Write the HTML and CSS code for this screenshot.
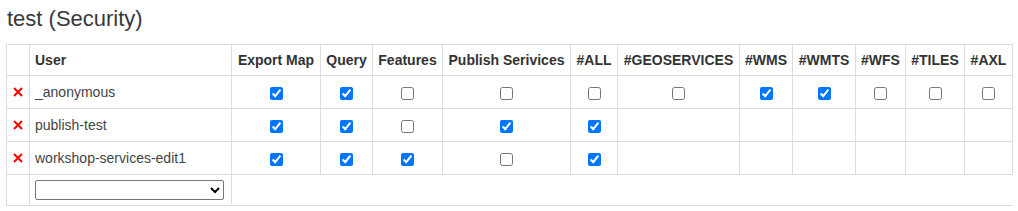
FILE: index.html
```html
<!DOCTYPE html>
<html>
<head>
<meta charset="utf-8">
<link rel="stylesheet" href="styles.css">
</head>
<body>
<h2 class="title">test (Security)</h2>
<table class="grid">
  <colgroup>
    <col class="c-del"><col class="c-user"><col class="c-export"><col class="c-query"><col class="c-feat"><col class="c-pub"><col class="c-all"><col class="c-geo"><col class="c-wms"><col class="c-wmts"><col class="c-wfs"><col class="c-tiles"><col class="c-axl">
  </colgroup>
  <thead>
    <tr>
      <th></th><th class="left">User</th><th>Export Map</th><th>Query</th><th>Features</th><th>Publish Serivices</th><th>#ALL</th><th>#GEOSERVICES</th><th>#WMS</th><th>#WMTS</th><th>#WFS</th><th>#TILES</th><th>#AXL</th>
    </tr>
  </thead>
  <tbody>
    <tr>
      <td class="del"><svg class="x" viewBox="0 0 10 10" width="10" height="10"><path d="M1 1 L9 9 M9 1 L1 9" stroke="#f00" stroke-width="2" fill="none"/></svg></td>
      <td class="left">_anonymous</td>
      <td><input type="checkbox" checked></td>
      <td><input type="checkbox" checked></td>
      <td><input type="checkbox"></td>
      <td><input type="checkbox"></td>
      <td><input type="checkbox"></td>
      <td><input type="checkbox"></td>
      <td><input type="checkbox" checked></td>
      <td><input type="checkbox" checked></td>
      <td><input type="checkbox"></td>
      <td><input type="checkbox"></td>
      <td><input type="checkbox"></td>
    </tr>
    <tr>
      <td class="del"><svg class="x" viewBox="0 0 10 10" width="10" height="10"><path d="M1 1 L9 9 M9 1 L1 9" stroke="#f00" stroke-width="2" fill="none"/></svg></td>
      <td class="left">publish-test</td>
      <td><input type="checkbox" checked></td>
      <td><input type="checkbox" checked></td>
      <td><input type="checkbox"></td>
      <td><input type="checkbox" checked></td>
      <td><input type="checkbox" checked></td>
      <td></td><td></td><td></td><td></td><td></td><td></td>
    </tr>
    <tr>
      <td class="del"><svg class="x" viewBox="0 0 10 10" width="10" height="10"><path d="M1 1 L9 9 M9 1 L1 9" stroke="#f00" stroke-width="2" fill="none"/></svg></td>
      <td class="left">workshop-services-edit1</td>
      <td><input type="checkbox" checked></td>
      <td><input type="checkbox" checked></td>
      <td><input type="checkbox" checked></td>
      <td><input type="checkbox"></td>
      <td><input type="checkbox" checked></td>
      <td></td><td></td><td></td><td></td><td></td><td></td>
    </tr>
    <tr class="add">
      <td></td>
      <td class="left"><select class="pick"><option></option></select></td>
      <td colspan="11" class="rest"></td>
    </tr>
  </tbody>
</table>
</body>
</html>
```

FILE: styles.css
```css
html, body {
  margin: 0;
  padding: 0;
  background: #fff;
}
body {
  padding: 6px 0 0 6px;
  font-family: "Liberation Sans", Arial, sans-serif;
  color: #444;
}
.title {
  margin: 0 0 0 1px;
  font-size: 22px;
  font-weight: normal;
  line-height: 26px;
  height: 38px;
  color: #383838;
}
.grid {
  border-collapse: collapse;
  table-layout: fixed;
  width: 1007px;
  font-size: 14px;
}
.grid th, .grid td {
  border: 1px solid #ddd;
  text-align: center;
  vertical-align: middle;
  padding: 0 5px;
  white-space: nowrap;
  overflow: hidden;
}
.grid th {
  height: 30px;
  font-weight: bold;
  color: #333;
}
.grid td {
  height: 32px;
}
.grid .left {
  text-align: left;
}
.grid tr.add td {
  height: 30px;
}
.grid td.rest {
  border-right: none;
}
.grid td.del {
  padding: 0;
  text-align: center;
}
.x {
  display: block;
  margin: 0 auto;
}
input[type=checkbox] {
  margin: 0;
  width: 13px;
  height: 13px;
  vertical-align: middle;
}
.pick {
  width: 189px;
  height: 20px;
  margin: 0;
  display: block;
  font-size: 13px;
  border: 1px solid #767676;
  border-radius: 2px;
  background: #fff;
}
.c-del { width: 23px; }
.c-user { width: 202px; }
.c-export { width: 89px; }
.c-query { width: 52px; }
.c-feat { width: 70px; }
.c-pub { width: 128px; }
.c-all { width: 47px; }
.c-geo { width: 122px; }
.c-wms { width: 53px; }
.c-wmts { width: 63px; }
.c-wfs { width: 50px; }
.c-tiles { width: 59px; }
.c-axl { width: 48px; }
```
